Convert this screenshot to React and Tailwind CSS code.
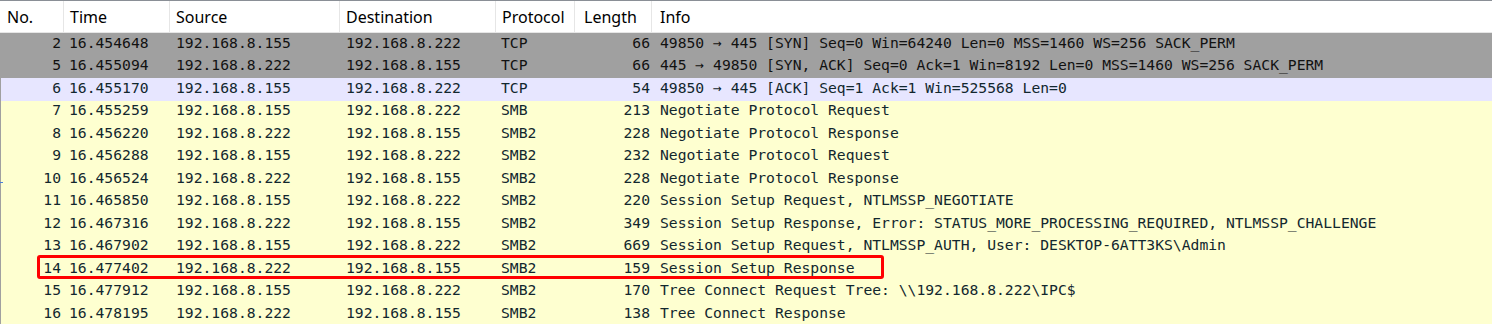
const cols = [
  { key: "no", label: "No.", w: "w-[64px]", head: "pl-[7px]", cell: "justify-end pr-[4px]" },
  { key: "time", label: "Time", w: "w-[106px]", head: "pl-[6px]", cell: "pl-[4px]" },
  { key: "src", label: "Source", w: "w-[170px]", head: "pl-[6px]", cell: "pl-[5px]" },
  { key: "dst", label: "Destination", w: "w-[156px]", head: "pl-[6px]", cell: "pl-[5px]" },
  { key: "proto", label: "Protocol", w: "w-[79px]", head: "pl-[6px]", cell: "pl-[4px]" },
  { key: "len", label: "Length", w: "w-[77px]", head: "pl-[9px]", cell: "justify-end pr-[3px]" },
  { key: "info", label: "Info", w: "flex-1", head: "pl-[8px]", cell: "pl-[7px]" },
];

const rows = [
  ["2", "16.454648", "192.168.8.155", "192.168.8.222", "TCP", "66", "49850 → 445 [SYN] Seq=0 Win=64240 Len=0 MSS=1460 WS=256 SACK_PERM", "syn"],
  ["5", "16.455094", "192.168.8.222", "192.168.8.155", "TCP", "66", "445 → 49850 [SYN, ACK] Seq=0 Ack=1 Win=8192 Len=0 MSS=1460 WS=256 SACK_PERM", "syn"],
  ["6", "16.455170", "192.168.8.155", "192.168.8.222", "TCP", "54", "49850 → 445 [ACK] Seq=1 Ack=1 Win=525568 Len=0", "tcp"],
  ["7", "16.455259", "192.168.8.155", "192.168.8.222", "SMB", "213", "Negotiate Protocol Request", "smb"],
  ["8", "16.456220", "192.168.8.222", "192.168.8.155", "SMB2", "228", "Negotiate Protocol Response", "smb"],
  ["9", "16.456288", "192.168.8.155", "192.168.8.222", "SMB2", "232", "Negotiate Protocol Request", "smb"],
  ["10", "16.456524", "192.168.8.222", "192.168.8.155", "SMB2", "228", "Negotiate Protocol Response", "smb"],
  ["11", "16.465850", "192.168.8.155", "192.168.8.222", "SMB2", "220", "Session Setup Request, NTLMSSP_NEGOTIATE", "smb"],
  ["12", "16.467316", "192.168.8.222", "192.168.8.155", "SMB2", "349", "Session Setup Response, Error: STATUS_MORE_PROCESSING_REQUIRED, NTLMSSP_CHALLENGE", "smb"],
  ["13", "16.467902", "192.168.8.155", "192.168.8.222", "SMB2", "669", "Session Setup Request, NTLMSSP_AUTH, User: DESKTOP-6ATT3KS\\Admin", "smb"],
  ["14", "16.477402", "192.168.8.222", "192.168.8.155", "SMB2", "159", "Session Setup Response", "smb"],
  ["15", "16.477912", "192.168.8.155", "192.168.8.222", "SMB2", "170", "Tree Connect Request Tree: \\\\192.168.8.222\\IPC$", "smb"],
  ["16", "16.478195", "192.168.8.222", "192.168.8.155", "SMB2", "138", "Tree Connect Response", "smb"],
];

const rowBg = {
  syn: "bg-[#a0a0a0] text-[#121212]",
  tcp: "bg-[#e7e6ff] text-[#12272e]",
  smb: "bg-[#feffd0] text-[#12272e]",
};

export default function App() {
  return (
    <div className="relative w-[1492px] h-[324px] overflow-hidden bg-white">
      <div className="border-t border-[#8a8f96]">
        <div className="flex h-[32px] border-b border-[#e6e6e6] bg-white text-[#000] font-['Noto_Sans',sans-serif] text-[16px]">
          {cols.map((c) => (
            <div
              key={c.key}
              className={`${c.w} ${c.head} flex items-center border-r border-[#e6e6e6] last:border-r-0`}
            >
              {c.label}
            </div>
          ))}
        </div>
        <div className="h-[291px] border-l border-[#a0a0a0] bg-[#feffd0] font-['DejaVu_Sans_Mono',monospace] text-[14.7px]">
          {rows.map((r) => (
            <div key={r[0]} className={`flex h-[22.5px] whitespace-pre ${rowBg[r[7]]}`}>
              {cols.map((c, i) => (
                <div key={c.key} className={`${c.w} ${c.cell} flex items-center pb-[3px] overflow-hidden`}>
                  {r[i]}
                </div>
              ))}
            </div>
          ))}
        </div>
      </div>
      <div className="absolute left-[37px] top-[255px] w-[847px] h-[24px] border-[3px] border-[#ff0000] rounded-[3px]"></div>
      <div className="absolute left-0 top-[182px] w-[3px] h-[1px] bg-[#4a7fd8]"></div>
    </div>
  );
}
